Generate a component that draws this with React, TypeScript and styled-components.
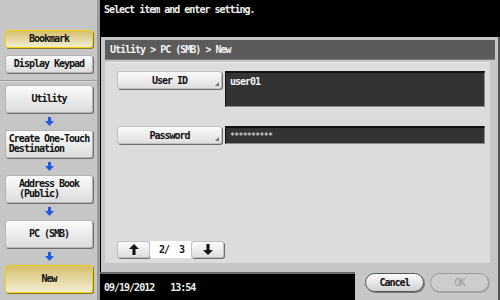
import React from 'react'
import styled, { createGlobalStyle, css } from 'styled-components'

const GlobalStyle = createGlobalStyle`
  html, body { margin: 0; padding: 0; background: #000; }
  body { width: 500px; height: 300px; overflow: hidden; }
  * { box-sizing: border-box; }
`

const font = css`
  font-family: "DejaVu Sans Mono", "Liberation Mono", monospace;
  font-size: 10px;
  font-weight: bold;
  letter-spacing: -1px;
`

const Screen = styled.div`
  ${font};
  display: flex;
  width: 500px;
  height: 300px;
  background: #000;
`

/* 좌측 사이드바 */
const Sidebar = styled.div`
  width: 100px;
  height: 300px;
  display: flex;
  flex-direction: column;
  background: #c6c6c6;
  border-right: 3px solid #9a9a9a;
`

const SideTop = styled.div`
  height: 81px;
  padding: 30px 0 0 5px;
  display: flex;
  flex-direction: column;
  gap: 7px;
  border-bottom: 1px solid #9c9c9c;
  box-shadow: 0 1px 0 #dadada;
`

const SideFlow = styled.div`
  padding: 4px 0 0 5px;
  display: flex;
  flex-direction: column;
`

const SideButton = styled.div<{ $active?: boolean; $tall?: boolean }>`
  width: 88px;
  height: ${({ $tall }) => ($tall ? 28 : 18)}px;
  border-radius: 3px;
  display: flex;
  align-items: center;
  justify-content: center;
  color: #111;
  line-height: 10px;
  border: 1px solid #b4b4b4;
  background: linear-gradient(#fbfbfb, #dcdcdc);
  box-shadow: 1px 1px 0 #6e6e6e;
  ${({ $active }) =>
    $active &&
    css`
      border: 1px solid #f2d20a;
      background: linear-gradient(#d6bf6c, #f3edd2);
      box-shadow: 1px 1px 0 #8a7a30;
    `}
`

const ButtonText = styled.span`
  display: inline-block;
  text-align: left;
  white-space: pre;
`

const FlowArrow = styled.div`
  width: 88px;
  height: 17px;
  display: flex;
  align-items: center;
  justify-content: center;
`

/* 우측 메인 */
const Main = styled.div`
  flex: 1;
  display: grid;
  grid-template-columns: 255px 145px;
  grid-template-rows: 37px 235px 28px;
`

const Message = styled.div`
  grid-column: 1 / 3;
  padding: 4px 0 0 4px;
  color: #f0f0f0;
`

const Frame = styled.div`
  grid-column: 1 / 3;
  margin-left: 1px;
  padding: 3px 0 0 4px;
  background: #c6c6c6;
  border-right: 2px solid #555;
  display: flex;
  flex-direction: column;
`

const TitleBar = styled.div`
  height: 20px;
  margin-right: 3px;
  padding-left: 5px;
  display: flex;
  align-items: center;
  background: #5b5b5b;
  color: #f2f2f2;
  border-bottom: 1px solid #7c7c7c;
`

const Content = styled.div`
  margin: 2px 8px 0 0;
  height: 201px;
  padding: 8px 5px 5px 12px;
  background: #dcdcdc;
  border-top: 1px solid #ececec;
  display: flex;
  flex-direction: column;
`

const FieldRow = styled.div<{ $gap?: number }>`
  display: flex;
  gap: 3px;
  margin-bottom: ${({ $gap }) => $gap ?? 0}px;
`

const FieldLabel = styled.div`
  position: relative;
  width: 105px;
  height: 18px;
  border-radius: 3px;
  display: flex;
  align-items: center;
  justify-content: center;
  color: #111;
  border: 1px solid #c0c0c0;
  background: linear-gradient(#fbfbfb, #dedede);
  box-shadow: 1px 1px 0 #6e6e6e;
`

const Corner = styled.span`
  position: absolute;
  right: 2px;
  bottom: 2px;
  width: 0;
  height: 0;
  border-left: 4px solid transparent;
  border-bottom: 4px solid #777;
`

const FieldValue = styled.div<{ $h: number }>`
  width: 260px;
  height: ${({ $h }) => $h}px;
  padding: 3px 4px;
  background: #333;
  color: #f4f4f4;
  border-top: 2px solid #111;
  border-left: 1px solid #111;
  border-bottom: 1px solid #8a8a8a;
  border-right: 1px solid #8a8a8a;
`

const Masked = styled.span`
  font-size: 8px;
  font-weight: normal;
  letter-spacing: -0.6px;
  position: relative;
  top: -1px;
`

const Pager = styled.div`
  margin-top: auto;
  display: flex;
  align-items: center;
`

const PageButton = styled.div`
  width: 33px;
  height: 17px;
  border-radius: 3px;
  display: flex;
  align-items: center;
  justify-content: center;
  border: 1px solid #c0c0c0;
  background: linear-gradient(#fbfbfb, #dedede);
  box-shadow: 1px 1px 0 #6e6e6e;
`

const PageCount = styled.div`
  width: 41px;
  height: 17px;
  background: #fff;
  color: #111;
  display: flex;
  align-items: center;
  padding-left: 9px;
  white-space: pre;
`

const FooterLeft = styled.div`
  border-top: 2px solid #6a6a6a;
  padding-left: 4px;
  display: flex;
  align-items: center;
  gap: 16px;
  color: #eee;
`

const FooterRight = styled.div`
  background: #c6c6c6;
  border-right: 2px solid #555;
  padding: 1px 0 0 10px;
  display: flex;
  gap: 6px;
  align-items: flex-start;
`

const PillButton = styled.div<{ $disabled?: boolean }>`
  width: 59px;
  height: 19px;
  border-radius: 10px;
  display: flex;
  align-items: center;
  justify-content: center;
  color: #111;
  border: 1px solid #555;
  background: linear-gradient(#fdfdfd, #d0d0d0);
  box-shadow: 1px 1px 0 #777;
  ${({ $disabled }) =>
    $disabled &&
    css`
      color: #9a9a9a;
      font-weight: normal;
      border: 1px solid #9c9c9c;
      background: #cdcdcd;
      box-shadow: 1px 1px 0 #a8a8a8;
    `}
`

const BlueArrow = () => (
  <svg width="9" height="9" viewBox="0 0 9 9">
    <path d="M3 0h3v4h3L4.5 9 0 4h3z" fill="#1f5ae8" />
  </svg>
)

const BlackArrow = ({ up }: { up?: boolean }) => (
  <svg width="10" height="11" viewBox="0 0 10 11" style={{ transform: up ? 'none' : 'rotate(180deg)' }}>
    <path d="M5 0L10 5H6.5V11H3.5V5H0z" fill="#111" />
  </svg>
)

const flow = ['Utility', 'Create One-Touch\nDestination', 'Address Book\n(Public)', 'PC (SMB)', 'New']

export default function App() {
  return (
    <>
      <GlobalStyle />
      <Screen>
        <Sidebar>
          <SideTop>
            <SideButton $active>Bookmark</SideButton>
            <SideButton>Display Keypad</SideButton>
          </SideTop>
          <SideFlow>
            {flow.map((label, i) => (
              <React.Fragment key={label}>
                {i > 0 && (
                  <FlowArrow>
                    <BlueArrow />
                  </FlowArrow>
                )}
                <SideButton $tall $active={i === flow.length - 1}>
                  <ButtonText>{label}</ButtonText>
                </SideButton>
              </React.Fragment>
            ))}
          </SideFlow>
        </Sidebar>

        <Main>
          <Message>Select item and enter setting.</Message>
          <Frame>
            <TitleBar>Utility &gt; PC (SMB) &gt; New</TitleBar>
            <Content>
              <FieldRow $gap={19}>
                <FieldLabel>
                  User ID
                  <Corner />
                </FieldLabel>
                <FieldValue $h={36}>user01</FieldValue>
              </FieldRow>
              <FieldRow>
                <FieldLabel>
                  Password
                  <Corner />
                </FieldLabel>
                <FieldValue $h={18}>
                  <Masked>**********</Masked>
                </FieldValue>
              </FieldRow>
              <Pager>
                <PageButton>
                  <BlackArrow up />
                </PageButton>
                <PageCount>2/  3</PageCount>
                <PageButton>
                  <BlackArrow />
                </PageButton>
              </Pager>
            </Content>
          </Frame>
          <FooterLeft>
            <span>09/19/2012</span>
            <span>13:54</span>
          </FooterLeft>
          <FooterRight>
            <PillButton>Cancel</PillButton>
            <PillButton $disabled>OK</PillButton>
          </FooterRight>
        </Main>
      </Screen>
    </>
  )
}
